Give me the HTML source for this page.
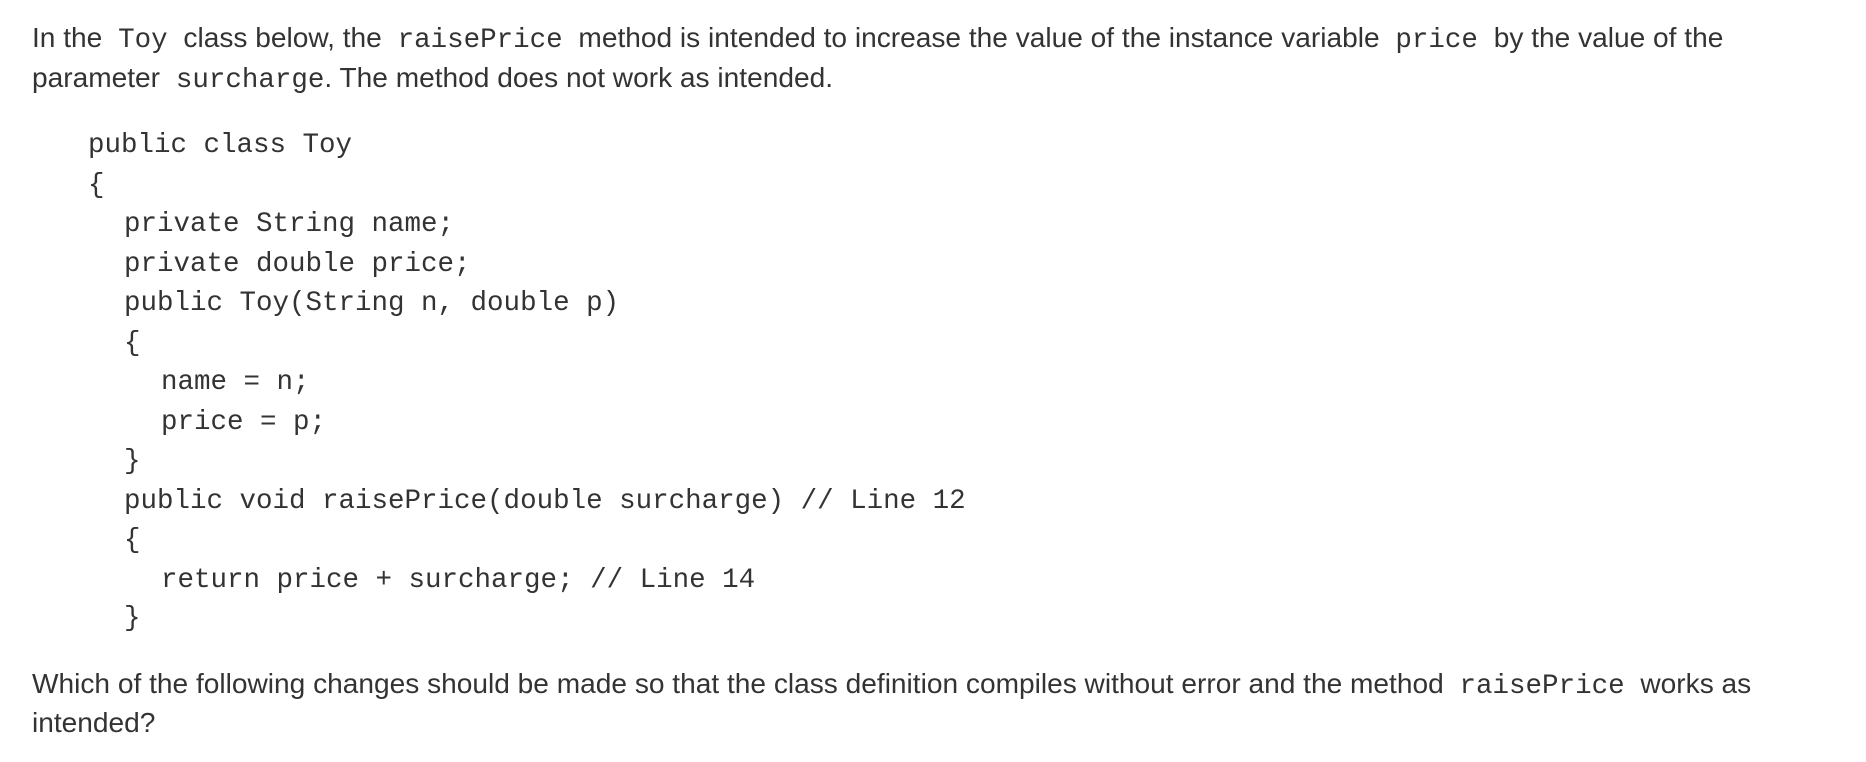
<!DOCTYPE html>
<html><head><meta charset="utf-8"><style>
html,body{margin:0;padding:0;background:#fff;width:1866px;height:762px;overflow:hidden}
body{font-family:"Liberation Sans",sans-serif;color:#333;font-size:28.1px}
.l{position:absolute;left:32px;white-space:nowrap;line-height:40px}
code,.c{font-family:"Liberation Mono",monospace;font-size:27.5px;color:#333}
code{padding:0 8px}
.c{position:absolute;white-space:pre;line-height:40px}
</style></head><body>
<div class="l" style="top:18px">In the <code>Toy</code> class below, the <code>raisePrice</code> method is intended to increase the value of the instance variable <code>price</code> by the value of the</div>
<div class="l" style="top:58px">parameter <code style="padding-right:0">surcharge</code>. The method does not work as intended.</div>
<div class="c" style="left:88px;top:126px">public class Toy</div>
<div class="c" style="left:88px;top:166px">{</div>
<div class="c" style="left:124px;top:205px">private String name;</div>
<div class="c" style="left:124px;top:245px">private double price;</div>
<div class="c" style="left:124px;top:284px">public Toy(String n, double p)</div>
<div class="c" style="left:124px;top:324px">{</div>
<div class="c" style="left:161px;top:363px">name = n;</div>
<div class="c" style="left:161px;top:403px">price = p;</div>
<div class="c" style="left:124px;top:442px">}</div>
<div class="c" style="left:124px;top:482px">public void raisePrice(double surcharge) // Line 12</div>
<div class="c" style="left:124px;top:521px">{</div>
<div class="c" style="left:161px;top:561px">return price + surcharge; // Line 14</div>
<div class="c" style="left:124px;top:599px">}</div>
<div class="l" style="top:664px">Which of the following changes should be made so that the class definition compiles without error and the method <code>raisePrice</code> works as</div>
<div class="l" style="top:703px">intended?</div>
</body></html>
